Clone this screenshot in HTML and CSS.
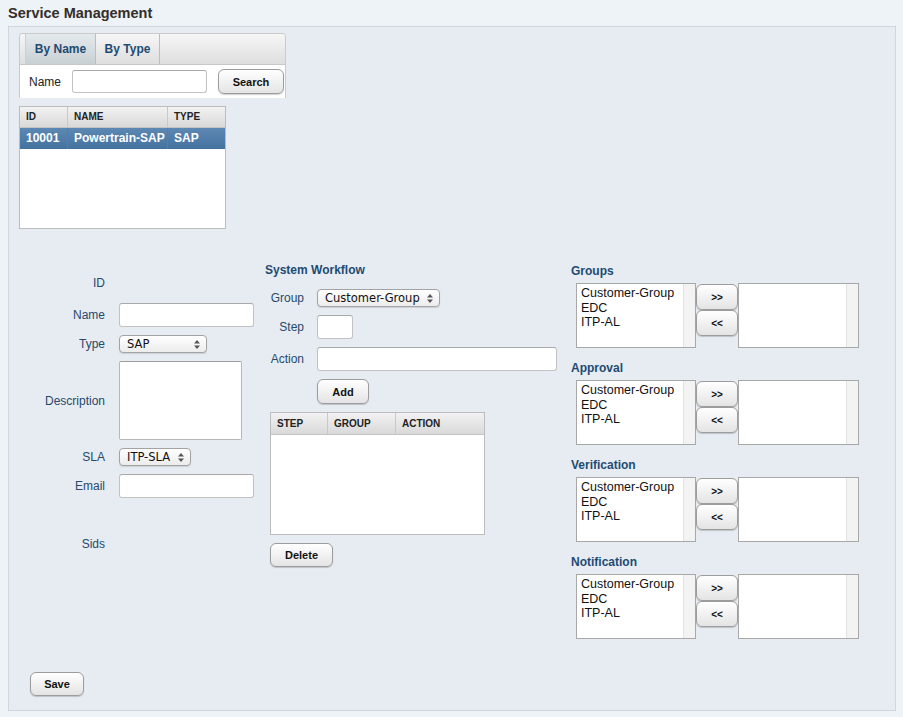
FILE: index.html
```html
<!DOCTYPE html>
<html>
<head>
<meta charset="utf-8">
<title>Service Management</title>
<link rel="stylesheet" href="styles.css">
</head>
<body>
<h1 class="title">Service Management</h1>
<div class="panel">
  <div class="tabs">
    <div class="tabbar">
      <div class="tab active">By Name</div>
      <div class="tab">By Type</div>
    </div>
    <div class="tabbody">
      <span class="lbl search-lbl">Name</span>
      <input class="txt search-input" type="text">
      <button class="btn search-btn">Search</button>
    </div>
  </div>

  <div class="grid">
    <div class="grid-head">
      <div class="gc gc-id">ID</div>
      <div class="gc gc-name">NAME</div>
      <div class="gc gc-type">TYPE</div>
    </div>
    <div class="grid-row selected">
      <div class="gc gc-id">10001</div>
      <div class="gc gc-name">Powertrain-SAP</div>
      <div class="gc gc-type">SAP</div>
    </div>
  </div>

  <div class="form-area">
    <div class="col-main">
      <div class="lbl">ID</div><div></div>
      <div class="lbl">Name</div><input class="txt w135" type="text">
      <div class="lbl">Type</div>
      <div class="select w88"><span>SAP</span><svg class="arr" width="6" height="9" viewBox="0 0 6 9"><path d="M0 3.5L3 0L6 3.5Z M0 5.5L3 9L6 5.5Z" fill="#555"/></svg></div>
      <div class="lbl">Description</div><textarea class="area"></textarea>
      <div class="lbl">SLA</div>
      <div class="select w72"><span>ITP-SLA</span><svg class="arr" width="6" height="9" viewBox="0 0 6 9"><path d="M0 3.5L3 0L6 3.5Z M0 5.5L3 9L6 5.5Z" fill="#555"/></svg></div>
      <div class="lbl">Email</div><input class="txt w135" type="text">
      <div class="lbl">Sids</div><div></div>
    </div>

    <div class="col-flow">
      <div class="sec-title">System Workflow</div>
      <div class="flow-rows">
        <div class="lbl">Group</div>
        <div class="select w123"><span>Customer-Group</span><svg class="arr" width="6" height="9" viewBox="0 0 6 9"><path d="M0 3.5L3 0L6 3.5Z M0 5.5L3 9L6 5.5Z" fill="#555"/></svg></div>
        <div class="lbl">Step</div><input class="txt w36" type="text">
        <div class="lbl">Action</div><input class="txt w240" type="text">
        <div></div><div><button class="btn add-btn">Add</button></div>
      </div>
      <div class="wtable">
        <div class="wt-head">
          <div class="wc wc-step">STEP</div>
          <div class="wc wc-group">GROUP</div>
          <div class="wc wc-action">ACTION</div>
        </div>
      </div>
      <button class="btn del-btn">Delete</button>
    </div>

    <div class="col-lists">
      <div class="lsec">
        <div class="sec-title">Groups</div>
        <div class="picker">
          <div class="listbox"><div class="items"><div>Customer-Group</div><div>EDC</div><div>ITP-AL</div></div><div class="track"></div></div>
          <div class="movers"><button class="btn mv">&gt;&gt;</button><button class="btn mv">&lt;&lt;</button></div>
          <div class="listbox right"><div class="items"></div><div class="track"></div></div>
        </div>
      </div>
      <div class="lsec">
        <div class="sec-title">Approval</div>
        <div class="picker">
          <div class="listbox"><div class="items"><div>Customer-Group</div><div>EDC</div><div>ITP-AL</div></div><div class="track"></div></div>
          <div class="movers"><button class="btn mv">&gt;&gt;</button><button class="btn mv">&lt;&lt;</button></div>
          <div class="listbox right"><div class="items"></div><div class="track"></div></div>
        </div>
      </div>
      <div class="lsec">
        <div class="sec-title">Verification</div>
        <div class="picker">
          <div class="listbox"><div class="items"><div>Customer-Group</div><div>EDC</div><div>ITP-AL</div></div><div class="track"></div></div>
          <div class="movers"><button class="btn mv">&gt;&gt;</button><button class="btn mv">&lt;&lt;</button></div>
          <div class="listbox right"><div class="items"></div><div class="track"></div></div>
        </div>
      </div>
      <div class="lsec">
        <div class="sec-title">Notification</div>
        <div class="picker">
          <div class="listbox"><div class="items"><div>Customer-Group</div><div>EDC</div><div>ITP-AL</div></div><div class="track"></div></div>
          <div class="movers"><button class="btn mv">&gt;&gt;</button><button class="btn mv">&lt;&lt;</button></div>
          <div class="listbox right"><div class="items"></div><div class="track"></div></div>
        </div>
      </div>
    </div>
  </div>

  <div class="footer">
    <button class="btn save-btn">Save</button>
  </div>
</div>
</body>
</html>
```

FILE: styles.css
```css
html, body {
  margin: 0;
  padding: 0;
}
body {
  background: #edf3f6;
  font-family: "Liberation Sans", Arial, sans-serif;
  font-size: 12px;
  color: #27496b;
}
.title {
  margin: 0 0 5px 0;
  padding: 5px 8px 0;
  font-size: 14.5px;
  line-height: 16px;
  font-weight: bold;
  color: #342d2a;
}
.panel {
  margin-left: 8px;
  width: 888px;
  box-sizing: border-box;
  border: 1px solid #cfd7dc;
  background: #e6ecf2;
  padding: 6px 10px 14px;
}

/* inputs */
.txt {
  box-sizing: border-box;
  border: 1px solid #c2c2c2;
  border-top-color: #a9a9a9;
  border-radius: 3px;
  background: #fff;
  height: 24px;
  padding: 0 4px;
  margin: 0;
  font: 12px "Liberation Sans", Arial, sans-serif;
}
.w135 { width: 135px; }
.w36 { width: 36px; }
.w240 { width: 240px; }
.area {
  box-sizing: border-box;
  width: 123px;
  height: 79px;
  margin: 0;
  border: 1px solid #b7b7b7;
  border-top-color: #9d9d9d;
  border-radius: 2px;
  background: #fff;
  resize: none;
}
.select {
  box-sizing: border-box;
  height: 18px;
  border: 1px solid #a3a3a3;
  border-radius: 4px;
  background: linear-gradient(#ffffff, #ececec);
  box-shadow: 0 1px 1px rgba(0,0,0,0.12);
  display: flex;
  align-items: center;
  justify-content: space-between;
  padding: 0 6px 0 7px;
  font: 11.5px "DejaVu Sans", "Liberation Sans", sans-serif;
  color: #111;
}
.select span { line-height: 16px; }
.w88 { width: 88px; }
.w72 { width: 72px; }
.w123 { width: 123px; }
.arr { display: block; }

/* buttons */
.btn {
  box-sizing: border-box;
  border: 1px solid #9c9c9c;
  border-radius: 6px;
  background: linear-gradient(#ffffff, #e4e4e4);
  box-shadow: 0 1px 1px rgba(0,0,0,0.18);
  font: bold 11px "Liberation Sans", Arial, sans-serif;
  color: #111;
  padding: 0;
  margin: 0;
  cursor: pointer;
}

/* tabs */
.tabs {
  width: 267px;
  box-sizing: border-box;
  border: 1px solid #cacaca;
  border-bottom: none;
  border-radius: 4px 4px 0 0;
  overflow: hidden;
}
.tabbar {
  height: 30px;
  display: flex;
  padding-left: 5px;
  background: linear-gradient(#f6f6f6, #dedede);
  border-bottom: 1px solid #c8c8c8;
}
.tab {
  height: 30px;
  line-height: 30px;
  font-weight: bold;
  color: #1e4b72;
  text-align: center;
  border-right: 1px solid #bdbdbd;
}
.tab.active {
  width: 71px;
  background: linear-gradient(#e4e9ec, #c9d0d4);
  border-left: 1px solid #d0d0d0;
  box-sizing: border-box;
}
.tab:not(.active) {
  width: 63px;
}
.tabbody {
  height: 33px;
  background: #fff;
  display: flex;
  align-items: center;
  padding-left: 9px;
}
.tabbody .search-lbl {
  flex: none;
  color: #222;
  width: 31px;
  text-align: left;
}
.tabbody .search-input {
  flex: none;
  margin-left: 12px;
  width: 135px;
  height: 23px;
}
.tabbody .search-btn {
  flex: none;
  margin-left: 11px;
  width: 66px;
  height: 25px;
}

/* grid */
.grid {
  margin-top: 8px;
  width: 207px;
  height: 123px;
  box-sizing: border-box;
  border: 1px solid #bcbcbc;
  background: #fff;
}
.grid-head {
  display: flex;
  height: 20px;
  background: linear-gradient(#f2f2f2, #d9d9d9);
  border-bottom: 1px solid #c4c4c4;
  font-size: 10px;
  font-weight: bold;
  color: #222;
}
.grid-head .gc {
  line-height: 20px;
  border-right: 1px solid #c9c9c9;
}
.gc {
  box-sizing: border-box;
  padding-left: 6px;
}
.gc-id { width: 48px; }
.gc-name { width: 100px; }
.gc-type { flex: 1; border-right: none !important; }
.grid-row {
  display: flex;
  height: 21px;
  line-height: 21px;
  font-size: 12px;
  font-weight: bold;
}
.grid-row.selected {
  background: linear-gradient(#5c88b3, #44729f);
  color: #fff;
}
.grid-row.selected .gc {
  border-right: 1px solid #55809f;
}

/* form area */
.form-area {
  margin-top: 34px;
  display: flex;
  align-items: flex-start;
}
.col-main {
  width: 246px;
  flex: none;
  padding-top: 8px;
  display: grid;
  grid-template-columns: 86px 1fr;
  grid-template-rows: 24px 24px 18px 79px 18px 24px 76px;
  column-gap: 14px;
  row-gap: 8px;
  box-sizing: border-box;
}
.lbl {
  align-self: center;
  text-align: right;
  color: #27496b;
  line-height: 14px;
}

.col-flow {
  width: 306px;
  flex: none;
}
.sec-title {
  font-weight: bold;
  color: #1e4b72;
  line-height: 14px;
}
.flow-rows {
  margin: 12px 0 0 5px;
  display: grid;
  grid-template-columns: 34px auto;
  grid-template-rows: 18px 24px 24px 25px;
  column-gap: 13px;
  row-gap: 8px;
  justify-items: start;
}
.flow-rows .lbl { justify-self: end; }
.flow-rows .add-btn {
  width: 52px;
  height: 25px;
}
.wtable {
  margin: 8px 0 0 5px;
  width: 215px;
  height: 123px;
  box-sizing: border-box;
  border: 1px solid #bcbcbc;
  background: #fff;
}
.wt-head {
  display: flex;
  height: 21px;
  background: linear-gradient(#f2f2f2, #d9d9d9);
  border-bottom: 1px solid #c4c4c4;
  font-size: 10px;
  font-weight: bold;
  color: #222;
}
.wc {
  box-sizing: border-box;
  line-height: 21px;
  padding-left: 6px;
  border-right: 1px solid #c9c9c9;
}
.wc-step { width: 57px; }
.wc-group { width: 68px; }
.wc-action { flex: 1; border-right: none; }
.col-flow .del-btn {
  display: block;
  margin: 8px 0 0 5px;
  width: 63px;
  height: 24px;
}

.col-lists {
  flex: none;
  padding-top: 1px;
}
.lsec { margin-bottom: 13px; }
.lsec:last-child { margin-bottom: 0; }
.picker {
  margin: 5px 0 0 5px;
  display: flex;
  align-items: flex-start;
}
.listbox {
  box-sizing: border-box;
  width: 120px;
  height: 65px;
  border: 1px solid #a8a8a8;
  background: #fff;
  display: flex;
}
.listbox.right { width: 121px; }
.items {
  flex: 1;
  padding: 2px 0 0 4px;
  font-size: 12.5px;
  line-height: 14.5px;
  color: #111;
}
.track {
  width: 11px;
  background: #f3f3f3;
  border-left: 1px solid #e2e2e2;
}
.movers {
  display: flex;
  flex-direction: column;
  width: 42px;
  padding-top: 1px;
}
.movers .mv {
  width: 42px;
  height: 26px;
  font-size: 10px;
}

.footer {
  margin-top: 33px;
  padding-left: 11px;
}
.footer .save-btn {
  width: 54px;
  height: 24px;
}
```
